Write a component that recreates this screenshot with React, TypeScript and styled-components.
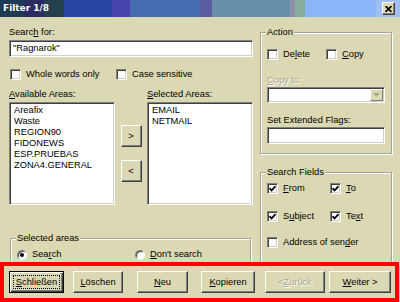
import React from 'react';
import styled, { createGlobalStyle } from 'styled-components';

const face = '#dbd9b3';

const GlobalStyle = createGlobalStyle`
  html, body {
    margin: 0;
    padding: 0;
    background: ${face};
  }
`;

const Window = styled.div`
  width: 400px;
  height: 302px;
  background: ${face};
  font-family: 'Liberation Sans', Arial, sans-serif;
  font-size: 9.3px;
  color: #000;
  display: flex;
  flex-direction: column;
  overflow: hidden;
`;

const TitleBar = styled.div`
  flex: none;
  height: 17px;
  display: flex;
  align-items: center;
  justify-content: space-between;
  padding: 0 5px 0 3px;
  box-sizing: border-box;
  background: linear-gradient(
    to right,
    #1e3b55 0 24px,
    #2b2a62 24px 44px,
    #24404e 44px 64px,
    #2746a4 64px 112px,
    #4844ac 112px 130px,
    #486cb0 130px 200px,
    #5c5ca0 200px 212px,
    #6890aa 212px 290px,
    #8e8eac 290px 295px,
    #86ac9c 295px 305px,
    #8cb4f8 305px 376px,
    #a0bef0 376px
  );
`;

const TitleText = styled.span`
  font-family: 'DejaVu Sans', sans-serif;
  font-weight: bold;
  font-size: 9px;
  color: #fff;
  line-height: 17px;
`;

const CloseButton = styled.div`
  width: 13px;
  height: 13px;
  box-sizing: border-box;
  background: ${face};
  border: 1px solid;
  border-color: #fff #404040 #404040 #fff;
  box-shadow: inset -1px -1px 0 #808080;
  display: flex;
  align-items: center;
  justify-content: center;
`;

const Body = styled.div`
  flex: none;
  height: 245px;
  display: flex;
  gap: 7px;
  padding: 10px 0 0 9px;
  box-sizing: border-box;
  overflow: hidden;
`;

const LeftColumn = styled.div`
  width: 244px;
  display: flex;
  flex-direction: column;
`;

const RightColumn = styled.div`
  width: 132px;
  display: flex;
  flex-direction: column;
`;

const Label = styled.div<{ $disabled?: boolean; $mt?: number }>`
  height: 11px;
  line-height: 11px;
  white-space: nowrap;
  margin-top: ${(p) => p.$mt ?? 0}px;
  color: ${(p) => (p.$disabled ? '#a9a790' : '#000')};
  text-shadow: ${(p) => (p.$disabled ? '1px 1px 0 #fff' : 'none')};
`;

const Key = styled.u`
  text-decoration: underline;
  text-underline-offset: 1px;
`;

const Sunken = styled.div<{ $h: number; $mt?: number; $w?: number }>`
  height: ${(p) => p.$h}px;
  width: ${(p) => (p.$w ? `${p.$w}px` : 'auto')};
  margin-top: ${(p) => p.$mt ?? 0}px;
  box-sizing: border-box;
  background: #fff;
  border: 1px solid;
  border-color: #808080 #fff #fff #808080;
  box-shadow: inset 1px 1px 0 #404040, inset -1px -1px 0 #d4d0c8;
`;

const FieldText = styled.div`
  padding: 0 3px;
  line-height: 15px;
  white-space: nowrap;
`;

const CheckRow = styled.div<{ $cols: string; $mt?: number; $ml?: number }>`
  display: grid;
  grid-template-columns: ${(p) => p.$cols};
  margin-top: ${(p) => p.$mt ?? 0}px;
  margin-left: ${(p) => p.$ml ?? 0}px;
  height: 11px;
`;

const Check = styled.div`
  display: flex;
  align-items: center;
  gap: 5px;
  height: 11px;
  line-height: 11px;
  white-space: nowrap;
`;

const Box = styled.span`
  flex: none;
  width: 11px;
  height: 11px;
  box-sizing: border-box;
  background: #fff;
  border: 1px solid;
  border-color: #808080 #fff #fff #808080;
  box-shadow: inset 1px 1px 0 #404040, inset -1px -1px 0 #d4d0c8;
  display: flex;
  align-items: center;
  justify-content: center;
`;

const RadioCircle = styled.span`
  flex: none;
  width: 10px;
  height: 10px;
  box-sizing: border-box;
  border-radius: 50%;
  background: #fff;
  border: 1px solid;
  border-color: #808080 #fff #fff #808080;
  box-shadow: inset 1px 1px 0 #404040;
  display: flex;
  align-items: center;
  justify-content: center;
`;

const RadioDot = styled.span`
  width: 4px;
  height: 4px;
  border-radius: 50%;
  background: #000;
`;

const ListsRow = styled.div`
  display: grid;
  grid-template-columns: 106px 32px 106px;
`;

const ListLabels = styled.div`
  display: grid;
  grid-template-columns: 138px 106px;
  margin-top: 9px;
`;

const ListBox = styled(Sunken)`
  padding: 2px 4px;
  overflow: hidden;
`;

const ListItem = styled.div`
  line-height: 11px;
  white-space: nowrap;
`;

const MoveButtons = styled.div`
  display: flex;
  flex-direction: column;
  align-items: center;
  gap: 13px;
  padding-top: 25px;
`;

const Group = styled.fieldset<{ $mt?: number; $ml?: number; $w?: number; $pt: number; $pb: number }>`
  margin: ${(p) => p.$mt ?? 0}px 0 0 ${(p) => p.$ml ?? 0}px;
  width: ${(p) => (p.$w ? `${p.$w}px` : 'auto')};
  box-sizing: border-box;
  min-width: 0;
  padding: ${(p) => p.$pt}px 6px ${(p) => p.$pb}px 6px;
  border: 1px solid #a5a494;
  box-shadow: inset 1px 1px 0 #fff, 1px 1px 0 #fff;
  display: flex;
  flex-direction: column;
`;

const GroupTitle = styled.legend`
  padding: 0 1px;
  margin-left: -1px;
  line-height: 11px;
  height: 11px;
  background: ${face};
  white-space: nowrap;
`;

const Combo = styled(Sunken)`
  display: flex;
  justify-content: flex-end;
  padding: 1px;
`;

const ComboButton = styled.span`
  width: 13px;
  box-sizing: border-box;
  background: ${face};
  border: 1px solid;
  border-color: #fff #808080 #808080 #fff;
  display: flex;
  align-items: center;
  justify-content: center;
`;

const ButtonFrame = styled.div`
  flex: none;
  position: relative;
  z-index: 1;
  width: 399px;
  height: 40px;
  box-sizing: border-box;
  border: 4px solid #f00;
  padding: 5px 0 0 5px;
  display: grid;
  grid-template-columns: repeat(6, 64px);
  align-items: start;
`;

const WinButton = styled.div<{ $w: number; $h?: number; $default?: boolean; $disabled?: boolean }>`
  width: ${(p) => p.$w}px;
  height: ${(p) => p.$h ?? 22}px;
  box-sizing: border-box;
  background: ${face};
  border: 1px solid;
  border-color: ${(p) => (p.$default ? '#000' : '#fff #404040 #404040 #fff')};
  box-shadow: ${(p) =>
    p.$default
      ? 'inset 1px 1px 0 #fff, inset -1px -1px 0 #404040, inset -2px -2px 0 #808080'
      : 'inset -1px -1px 0 #808080'};
  display: flex;
  align-items: stretch;
  justify-content: center;
  padding: 3px;
  white-space: nowrap;
  color: ${(p) => (p.$disabled ? '#a9a790' : '#000')};
  text-shadow: ${(p) => (p.$disabled ? '1px 1px 0 #fff' : 'none')};
`;

const FocusRect = styled.span<{ $on?: boolean }>`
  flex: 1;
  display: flex;
  align-items: center;
  justify-content: center;
  border: 1px dotted ${(p) => (p.$on ? '#000' : 'transparent')};
`;

const Tick = () => (
  <svg width="7" height="7" viewBox="0 0 7 7">
    <polyline points="0.5,3.2 2.6,5.4 6.5,1.2" fill="none" stroke="#000" strokeWidth="1.7" />
  </svg>
);

const CheckBox: React.FC<{ checked?: boolean; children: React.ReactNode }> = ({ checked, children }) => (
  <Check>
    <Box>{checked && <Tick />}</Box>
    <span>{children}</span>
  </Check>
);

const Radio: React.FC<{ checked?: boolean; children: React.ReactNode }> = ({ checked, children }) => (
  <Check>
    <RadioCircle>{checked && <RadioDot />}</RadioCircle>
    <span>{children}</span>
  </Check>
);

const available = ['Areafix', 'Waste', 'REGION90', 'FIDONEWS', 'ESP.PRUEBAS', 'ZONA4.GENERAL'];
const selected = ['EMAIL', 'NETMAIL'];

export default function App() {
  return (
    <Window>
      <GlobalStyle />
      <TitleBar>
        <TitleText>Filter 1/8</TitleText>
        <CloseButton>
          <svg width="7" height="6" viewBox="0 0 7 6">
            <path d="M0.5 0 L6.5 6 M6.5 0 L0.5 6" stroke="#000" strokeWidth="1.6" />
          </svg>
        </CloseButton>
      </TitleBar>

      <Body>
        <LeftColumn>
          <Label>
            Searc<Key>h</Key> for:
          </Label>
          <Sunken $h={17} $mt={2}>
            <FieldText>"Ragnarok"</FieldText>
          </Sunken>
          <CheckRow $cols="106px auto" $mt={12} $ml={1}>
            <CheckBox>Whole words only</CheckBox>
            <CheckBox>Case sensitive</CheckBox>
          </CheckRow>
          <ListLabels>
            <Label>
              <Key>A</Key>vailable Areas:
            </Label>
            <Label>
              <Key>S</Key>elected Areas:
            </Label>
          </ListLabels>
          <ListsRow>
            <ListBox $h={103} $mt={2}>
              {available.map((a) => (
                <ListItem key={a}>{a}</ListItem>
              ))}
            </ListBox>
            <MoveButtons>
              <WinButton $w={21}>
                <FocusRect>&gt;</FocusRect>
              </WinButton>
              <WinButton $w={21}>
                <FocusRect>&lt;</FocusRect>
              </WinButton>
            </MoveButtons>
            <ListBox $h={103} $mt={2}>
              {selected.map((a) => (
                <ListItem key={a}>{a}</ListItem>
              ))}
            </ListBox>
          </ListsRow>
          <Group $mt={28} $ml={1} $w={241} $pt={5} $pb={6}>
            <GroupTitle>Selected areas</GroupTitle>
            <CheckRow $cols="118px auto">
              <Radio checked>
                Sea<Key>r</Key>ch
              </Radio>
              <Radio>
                <Key>D</Key>on't search
              </Radio>
            </CheckRow>
          </Group>
        </LeftColumn>

        <RightColumn>
          <Group $pt={11} $pb={9}>
            <GroupTitle>Action</GroupTitle>
            <CheckRow $cols="59px auto">
              <CheckBox>
                De<Key>l</Key>ete
              </CheckBox>
              <CheckBox>
                <Key>C</Key>opy
              </CheckBox>
            </CheckRow>
            <Label $disabled $mt={15}>
              <Key>C</Key>opy to:
            </Label>
            <Combo $h={16} $mt={1} $w={118}>
              <ComboButton>
                <svg width="7" height="4" viewBox="0 0 7 4">
                  <path d="M0 0 H7 L3.5 4 Z" fill="#a9a790" />
                </svg>
              </ComboButton>
            </Combo>
            <Label $mt={12}>Set Extended Flags:</Label>
            <Sunken $h={17} $mt={1} $w={118} />
          </Group>
          <Group $mt={13} $pt={5} $pb={20}>
            <GroupTitle>Search Fields</GroupTitle>
            <CheckRow $cols="63px auto">
              <CheckBox checked>
                <Key>F</Key>rom
              </CheckBox>
              <CheckBox checked>
                <Key>T</Key>o
              </CheckBox>
            </CheckRow>
            <CheckRow $cols="63px auto" $mt={17}>
              <CheckBox checked>
                S<Key>u</Key>bject
              </CheckBox>
              <CheckBox checked>
                Te<Key>x</Key>t
              </CheckBox>
            </CheckRow>
            <CheckRow $cols="auto" $mt={15}>
              <CheckBox>
                Address of sen<Key>d</Key>er
              </CheckBox>
            </CheckRow>
          </Group>
        </RightColumn>
      </Body>

      <ButtonFrame>
        <WinButton $w={55} $default>
          <FocusRect $on>
            <Key>S</Key>chließen
          </FocusRect>
        </WinButton>
        <WinButton $w={50}>
          <FocusRect>
            <Key>L</Key>öschen
          </FocusRect>
        </WinButton>
        <WinButton $w={51}>
          <FocusRect>
            <Key>N</Key>eu
          </FocusRect>
        </WinButton>
        <WinButton $w={54}>
          <FocusRect>
            <Key>K</Key>opieren
          </FocusRect>
        </WinButton>
        <WinButton $w={60} $disabled>
          <FocusRect>
            &lt; <Key>Z</Key>urück
          </FocusRect>
        </WinButton>
        <WinButton $w={62}>
          <FocusRect>
            <Key>W</Key>eiter &gt;
          </FocusRect>
        </WinButton>
      </ButtonFrame>
    </Window>
  );
}
